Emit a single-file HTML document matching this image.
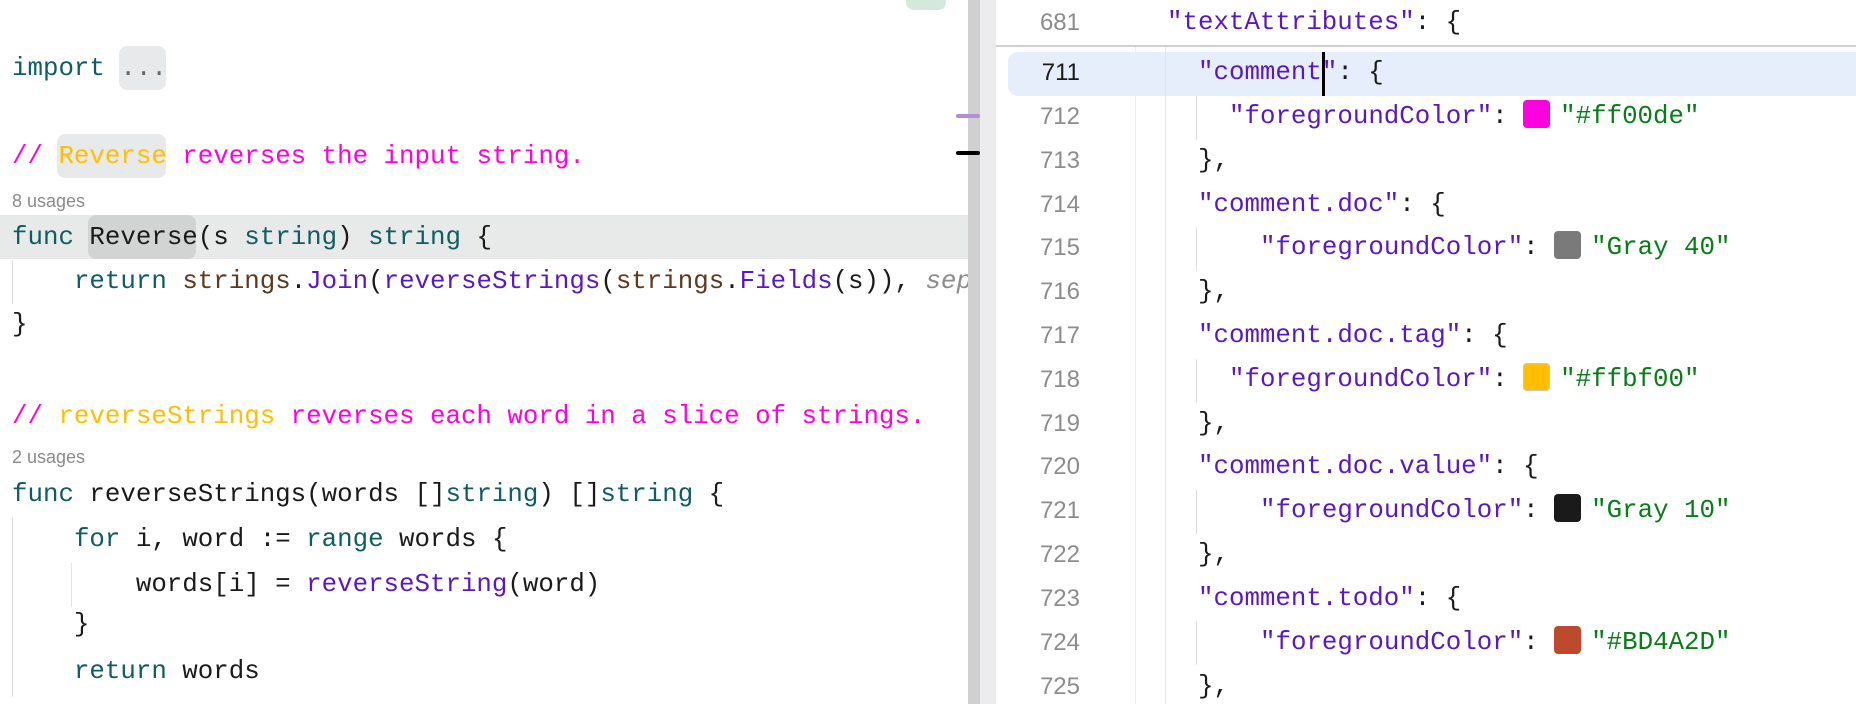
<!DOCTYPE html>
<html><head><meta charset="utf-8"><style>
body{margin:0;width:1856px;height:704px;overflow:hidden;background:#fff;position:relative;font-family:"Liberation Mono",monospace;}
.l{position:absolute;height:44px;line-height:44px;font-size:25.8px;white-space:pre;color:#1a1a1a;}
.k{color:#0f5c62}.c{color:#ff00de}.y{color:#ffbf00}.b{color:#5d3a1e}.p{color:#5a18c0}.g{color:#067d17}.i{color:#8c8c8c;font-style:italic}
.u{position:absolute;font-family:"Liberation Sans",sans-serif;font-size:18px;color:#8a8a8a;left:12px}
.n{position:absolute;left:1000px;width:80px;text-align:right;font-family:"Liberation Sans",sans-serif;font-size:24px;color:#8c8c8c;height:44px;line-height:44px}
.r{position:absolute;background:#000}
.sw{display:inline-block;width:27px;height:28px;border-radius:4px;vertical-align:-5px;margin-right:10px}
.gd{position:absolute;width:1px;background:#dedede}
</style></head><body>
<!-- left panel -->
<div style="position:absolute;left:906px;top:0;width:40px;height:10px;background:#d4e9dc;border-radius:0 0 8px 8px"></div>
<div style="position:absolute;left:0;top:215px;width:968px;height:44px;background:#e8e9e9"></div>
<div style="position:absolute;left:88px;top:215px;width:108px;height:44px;background:#d2d3d3;border-radius:8px"></div>
<div style="position:absolute;left:119px;top:46px;width:47px;height:44px;background:#e8e9ea;border-radius:8px"></div>
<div style="position:absolute;left:57px;top:134px;width:109px;height:44px;background:#e8e9ea;border-radius:8px"></div>
<div class="gd" style="left:12px;top:260px;height:44px"></div>
<div class="gd" style="left:12px;top:517px;height:180px"></div>
<div class="gd" style="left:71px;top:563px;height:44px;background:#e4e4e4"></div>

<div class="l" style="left:12px;top:47px"><span class="k">import</span> <span style="color:#666">...</span></div>
<div class="l" style="left:12px;top:135px"><span class="c">// </span><span class="y">Reverse</span><span class="c"> reverses the input string.</span></div>
<div class="u" style="top:191px">8 usages</div>
<div class="l" style="left:12px;top:216px"><span class="k">func</span> Reverse(s <span class="k">string</span>) <span class="k">string</span> {</div>
<div class="l" style="left:12px;top:260px">    <span class="k">return</span> <span class="b">strings</span>.<span class="p">Join</span>(<span class="p">reverseStrings</span>(<span class="b">strings</span>.<span class="p">Fields</span>(s)), <span class="i">sep</span></div>
<div class="l" style="left:12px;top:303px">}</div>
<div class="l" style="left:12px;top:395px"><span class="c">// </span><span class="y">reverseStrings</span><span class="c"> reverses each word in a slice of strings.</span></div>
<div class="u" style="top:447px">2 usages</div>
<div class="l" style="left:12px;top:473px"><span class="k">func</span> reverseStrings(words []<span class="k">string</span>) []<span class="k">string</span> {</div>
<div class="l" style="left:12px;top:518px">    <span class="k">for</span> i, word := <span class="k">range</span> words {</div>
<div class="l" style="left:12px;top:563px">        words[i] = <span class="p">reverseString</span>(word)</div>
<div class="l" style="left:12px;top:603px">    }</div>
<div class="l" style="left:12px;top:650px">    <span class="k">return</span> words</div>
<div style="position:absolute;left:968px;top:0;width:12px;height:704px;background:#d0d0d0"></div>
<div style="position:absolute;left:980px;top:0;width:16px;height:704px;background:#ececef"></div>
<div style="position:absolute;left:956px;top:114px;width:24px;height:4px;background:#b48ce0;border-radius:2px"></div>
<div style="position:absolute;left:956px;top:151px;width:24px;height:4px;background:#000;border-radius:2px"></div>

<!-- right panel -->
<div style="position:absolute;left:996px;top:45px;width:860px;height:2px;background:#d0d0d0"></div>
<div style="position:absolute;left:1008px;top:52px;width:848px;height:44px;background:#e5eefa;border-radius:10px 0 0 10px"></div>
<div class="gd" style="left:1135px;top:47px;height:657px;background:#ececec"></div>
<div class="gd" style="left:1165px;top:47px;height:657px;background:#e6e6e6"></div>
<div class="gd" style="left:1196px;top:96px;height:44px"></div>
<div class="gd" style="left:1196px;top:227px;height:44px"></div>
<div class="gd" style="left:1196px;top:359px;height:44px"></div>
<div class="gd" style="left:1196px;top:490px;height:44px"></div>
<div class="gd" style="left:1196px;top:621px;height:44px"></div>

<div class="n" style="top:1px">681</div>
<div class="l" style="left:1167px;top:1px"><span class="p">"textAttributes"</span>: {</div>
<div class="n" style="top:51px;color:#1a1a1a">711</div>
<div class="l" style="left:1198px;top:51px"><span class="p">"comment"</span>: {</div>
<div class="r" style="left:1322px;top:52px;width:3px;height:44px"></div>
<div class="n" style="top:95px">712</div>
<div class="l" style="left:1229px;top:95px"><span class="p">"foregroundColor"</span>: <span class="sw" style="background:#ff00de"></span><span class="g">"#ff00de"</span></div>
<div class="n" style="top:139px">713</div>
<div class="l" style="left:1198px;top:139px">},</div>
<div class="n" style="top:183px">714</div>
<div class="l" style="left:1198px;top:183px"><span class="p">"comment.doc"</span>: {</div>
<div class="n" style="top:226px">715</div>
<div class="l" style="left:1260px;top:226px"><span class="p">"foregroundColor"</span>: <span class="sw" style="background:#7a7a7a"></span><span class="g">"Gray 40"</span></div>
<div class="n" style="top:270px">716</div>
<div class="l" style="left:1198px;top:270px">},</div>
<div class="n" style="top:314px">717</div>
<div class="l" style="left:1198px;top:314px"><span class="p">"comment.doc.tag"</span>: {</div>
<div class="n" style="top:358px">718</div>
<div class="l" style="left:1229px;top:358px"><span class="p">"foregroundColor"</span>: <span class="sw" style="background:#ffbf00;box-shadow:inset 0 0 0 1px #c8c8c8"></span><span class="g">"#ffbf00"</span></div>
<div class="n" style="top:402px">719</div>
<div class="l" style="left:1198px;top:402px">},</div>
<div class="n" style="top:445px">720</div>
<div class="l" style="left:1198px;top:445px"><span class="p">"comment.doc.value"</span>: {</div>
<div class="n" style="top:489px">721</div>
<div class="l" style="left:1260px;top:489px"><span class="p">"foregroundColor"</span>: <span class="sw" style="background:#1a1a1a"></span><span class="g">"Gray 10"</span></div>
<div class="n" style="top:533px">722</div>
<div class="l" style="left:1198px;top:533px">},</div>
<div class="n" style="top:577px">723</div>
<div class="l" style="left:1198px;top:577px"><span class="p">"comment.todo"</span>: {</div>
<div class="n" style="top:621px">724</div>
<div class="l" style="left:1260px;top:621px"><span class="p">"foregroundColor"</span>: <span class="sw" style="background:#bd4a2d"></span><span class="g">"#BD4A2D"</span></div>
<div class="n" style="top:665px">725</div>
<div class="l" style="left:1198px;top:665px">},</div>
</body></html>
